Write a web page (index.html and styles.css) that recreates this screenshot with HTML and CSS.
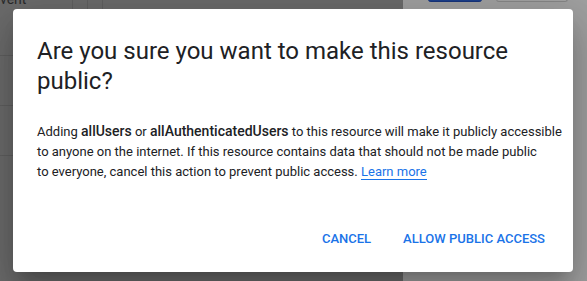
FILE: index.html
```html
<!DOCTYPE html>
<html lang="en">
<head>
  <meta charset="UTF-8">
  <title>Make resource public</title>
  <link rel="stylesheet" href="styles.css">
</head>
<body>
  <div class="page">
    <div class="main">
      <div class="row head">
        <span class="cell first">vent</span>
        <span class="cell narrow"></span>
        <span class="cell"></span>
      </div>
      <div class="row"></div>
      <div class="row"></div>
    </div>
    <div class="side">
      <span class="btn primary"></span>
      <span class="btn outline"></span>
    </div>
  </div>

  <div class="overlay">
    <div class="dialog">
      <h1>Are you sure you want to make this resource public?</h1>
      <p>Adding <b>allUsers</b> or <b>allAuthenticatedUsers</b> to this resource will make it publicly accessible<br>
        to anyone on the internet. If this resource contains data that should not be made public<br>
        to everyone, cancel this action to prevent public access. <a href="#">Learn more</a></p>
      <div class="actions">
        <button type="button">Cancel</button>
        <button type="button">Allow public access</button>
      </div>
    </div>
  </div>
</body>
</html>
```

FILE: styles.css
```css
body {
  margin: 0; padding: 0;
  font-family: Roboto, Arial, sans-serif;
  overflow: hidden;
}
.page {
  display: flex;
  height: 281px;
}
.main {
  width: 403px;
  background: #6b6b6b;
}
.row {
  height: 49px;
  border-bottom: 1px solid #5f5f5f;
}
.row.head {
  height: 55px;
  display: flex;
}
.cell {
  border-right: 1px solid #606060;
  width: 14px;
}
.cell.first {
  width: 72px;
  color: #2a2a2a;
  font-size: 14px;
  line-height: 14px;
  margin-top: -8px;
  border-right: 1px solid #606060;
}
.cell.narrow { width: 14px; }
.side {
  flex: 1;
  background: #a0a0a0;
  display: flex;
  gap: 14px;
  padding-left: 25px;
  align-items: flex-start;
}
.btn {
  height: 2px;
  margin-top: -1px;
  border-radius: 0 0 3px 3px;
}
.btn.primary {
  width: 54px;
  background: #1c3f8c;
  border-bottom: 1px solid #18347a;
}
.btn.outline {
  width: 70px;
  background: #a3a3a3;
  border: 1px solid #868686;
  border-top: none;
}

.overlay {
  position: absolute;
  top: 0; left: 0; right: 0; bottom: 0;
  padding: 9px 0 0 13px;
}
.dialog {
  width: 560px;
  height: 263px;
  box-sizing: border-box;
  background: #fff;
  border-radius: 4px;
  padding: 27px 0 0 24px;
  box-shadow: 0 11px 15px -7px rgba(0,0,0,0.2), 0 24px 38px 3px rgba(0,0,0,0.14), 0 9px 46px 8px rgba(0,0,0,0.12);
  display: flex;
  flex-direction: column;
}
.dialog h1 {
  margin: 0;
  font-size: 24px;
  font-weight: 400;
  line-height: 30px;
  color: #202124;
  padding-right: 40px;
}
.dialog p {
  margin: 25px 0 0 0;
  font-size: 13px;
  line-height: 20px;
  color: #202124;
  white-space: nowrap;
}
.dialog b { font-weight: 500; font-size: 14px; }
.dialog a {
  color: #1a73e8;
  text-decoration: none;
  border-bottom: 1px solid #1a73e8;
}
.actions {
  margin-top: auto;
  display: flex;
  justify-content: flex-end;
  gap: 8px;
  padding: 0 16px 16px 0;
}
.actions button {
  background: none;
  border: none;
  height: 36px;
  padding: 0 12px;
  font-family: inherit;
  font-size: 13px;
  font-weight: 500;
  text-transform: uppercase;
  color: #1a73e8;
  cursor: pointer;
}
```
